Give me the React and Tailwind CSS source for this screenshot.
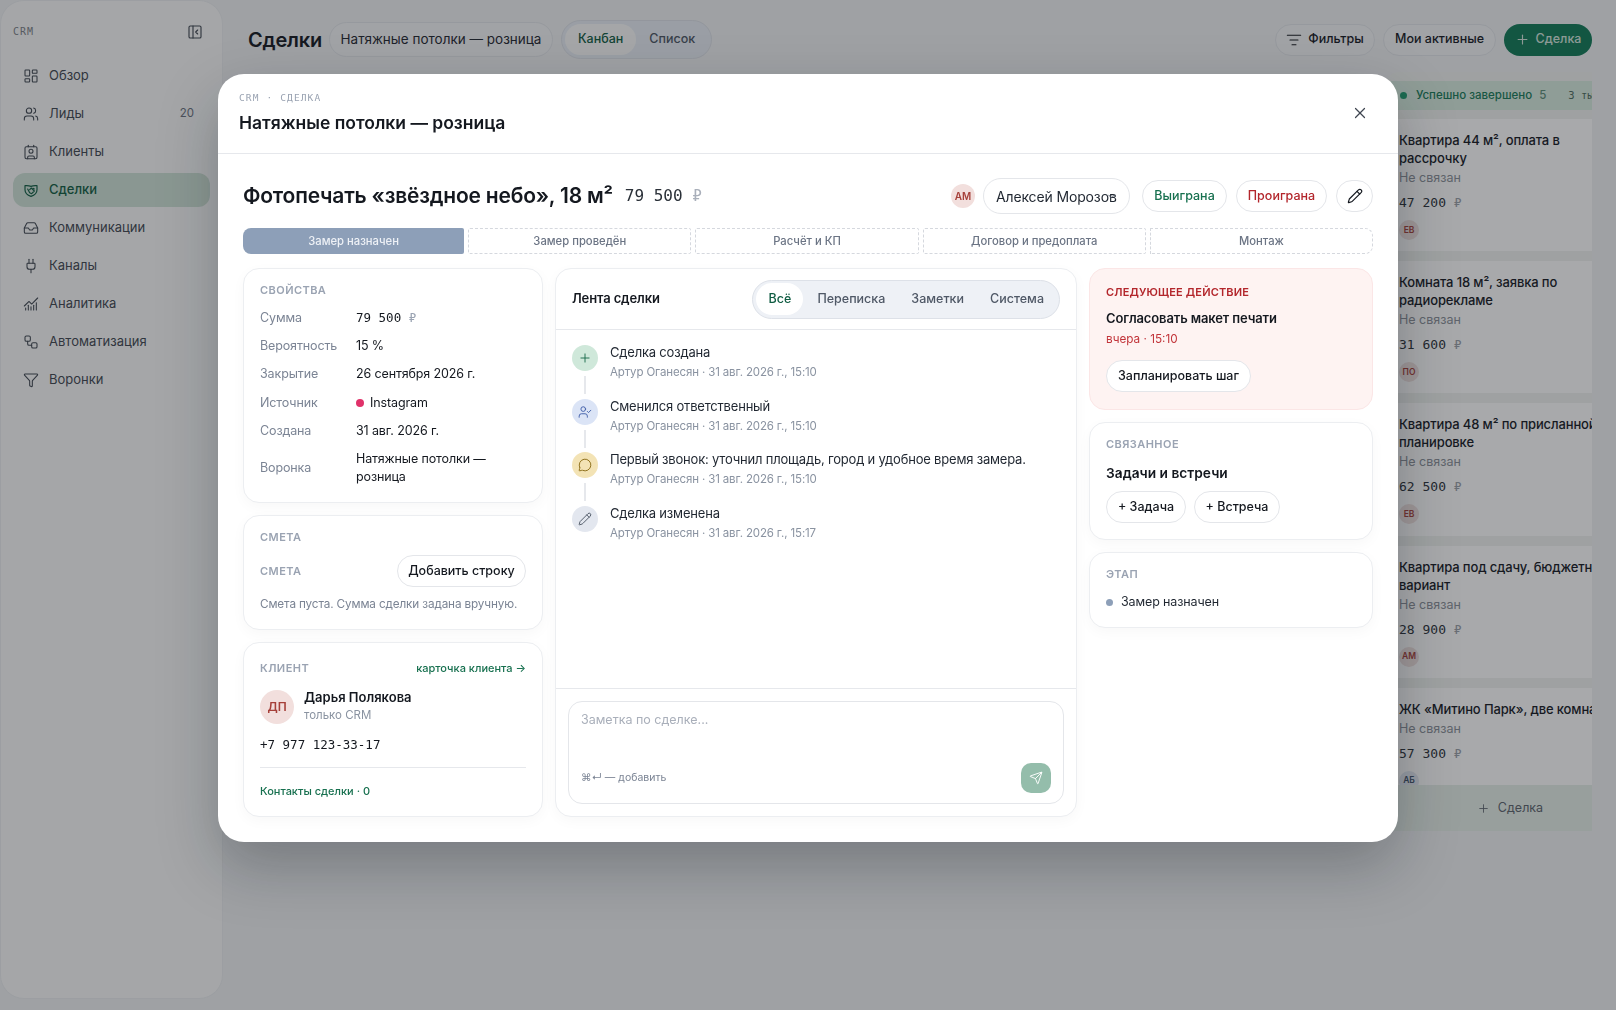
import {
  ChartNoAxesCombined,
  ChevronDown,
  Contact,
  Funnel,
  Inbox,
  LayoutDashboard,
  ListFilter,
  MessageCircle,
  PanelLeftClose,
  Pencil,
  Plug,
  Plus,
  Send,
  UserCheck,
  Users,
  Workflow,
  X,
} from "lucide-react";

const mono = "font-['DejaVu_Sans_Mono',monospace]";

// Щит с рукопожатием, в иконпаке такого нет
function DealsIcon({ size = 16, strokeWidth = 1.6 }) {
  return (
    <svg width={size} height={size} viewBox="0 0 24 24" fill="none" stroke="currentColor" strokeWidth={strokeWidth * 1.1} strokeLinecap="round" strokeLinejoin="round">
      <path d="M3 5.5c3 0 5.5-.4 9 1 3.5-1.4 6-1 9-1v6c0 5-4 8.300-9 10-5-1.700-9-5-9-10Z" />
      <path d="M7 10.500l3 5.500 3 1.500 4-4-4.500-4.500-2.500 2.500" />
      <path d="M17 10.500l-2-1" />
    </svg>
  );
}

const navItems = [
  { label: "Обзор", icon: LayoutDashboard },
  { label: "Лиды", icon: Users, badge: "20" },
  { label: "Клиенты", icon: Contact },
  { label: "Сделки", icon: DealsIcon, active: true },
  { label: "Коммуникации", icon: Inbox },
  { label: "Каналы", icon: Plug },
  { label: "Аналитика", icon: ChartNoAxesCombined },
  { label: "Автоматизация", icon: Workflow },
  { label: "Воронки", icon: Funnel },
];

const boardCards = [
  { title: "Квартира 44 м², оплата в рассрочку", sum: "47 200", who: "ЕВ" },
  { title: "Комната 18 м², заявка по радиорекламе", sum: "31 600", who: "ПО" },
  { title: "Квартира 48 м² по присланной планировке", sum: "62 500", who: "ЕВ" },
  { title: "Квартира под сдачу, бюджетный вариант", sum: "28 900", who: "АМ" },
  { title: "ЖК «Митино Парк», две комнаты", sum: "57 300", who: "АБ", blue: true },
];

const stages = ["Замер проведён", "Расчёт и КП", "Договор и предоплата", "Монтаж"];

const feed = [
  { title: "Сделка создана", time: "15:10", icon: Plus, tone: "bg-[#cfe8da] text-[#1b6b4c]" },
  { title: "Сменился ответственный", time: "15:10", icon: UserCheck, tone: "bg-[#dbe4f6] text-[#3f5ea8]" },
  {
    title: "Первый звонок: уточнил площадь, город и удобное время замера.",
    time: "15:10",
    icon: MessageCircle,
    tone: "bg-[#f3e3b5] text-[#8a6a14]",
  },
  { title: "Сделка изменена", time: "15:17", icon: Pencil, tone: "bg-[#e3e7ef] text-[#4b5563]" },
];

function Sidebar() {
  return (
    <aside className="h-[999px] w-[223px] shrink-0 rounded-[24px] border border-[#eceef0] bg-[#fafbfb] px-[12px]">
      <div className="flex h-[58px] items-center justify-between pt-[3px]">
        <span className={`${mono} text-[10px] tracking-[0.1em] text-[#7c8187]`}>CRM</span>
        <PanelLeftClose size={16} strokeWidth={1.7} className="mr-[7px] text-[#3f4650]" />
      </div>
      <nav className="flex flex-col gap-[4px]">
        {navItems.map((item) => (
          <div
            key={item.label}
            className={`flex h-[34px] items-center gap-[10px] rounded-[12px] px-[10px] text-[13px] ${
              item.active ? "bg-[#cfe3d7] font-medium text-[#0f5c42]" : "text-[#3f4650]"
            }`}
          >
            <item.icon size={16} strokeWidth={1.6} />
            <span className="flex-1">{item.label}</span>
            {item.badge && <span className="pr-[6px] text-[11.5px] text-[#6b7280]">{item.badge}</span>}
          </div>
        ))}
      </nav>
    </aside>
  );
}

function TopBar() {
  return (
    <div className="flex items-center pb-[13px] pt-5">
      <h1 className="text-[20px] font-semibold tracking-[-0.01em] text-[#14181f]">Сделки</h1>
      <div className="ml-[7px] flex h-[35px] w-[224px] items-center justify-center rounded-full border border-[#e3e6ea] bg-[#f4f5f7] text-[13.5px] text-[#1f2630]">
        Натяжные потолки — розница
      </div>
      <div className="ml-[8px] flex h-[39px] items-center rounded-full border border-[#dde1e8] bg-[#e9eef5] p-[3px] text-[12.5px] font-medium">
        <span className="flex h-[31px] items-center rounded-full bg-[#fafbfb] px-[13px] text-[#0f5c42]">Канбан</span>
        <span className="flex h-[31px] items-center px-[13px] text-[#4b5563]">Список</span>
      </div>
      <div className="ml-auto flex items-center gap-[8px] text-[12.5px] font-medium text-[#14181f]">
        <span className="flex h-[32px] w-[100px] items-center justify-center gap-[6px] rounded-full border border-[#e3e6ea] bg-[#f4f5f7]">
          <ListFilter size={16} strokeWidth={1.6} />
          Фильтры
        </span>
        <span className="flex h-[32px] w-[113px] items-center justify-center rounded-full border border-[#e3e6ea] bg-[#f4f5f7]">
          Мои активные
        </span>
        <span className="flex h-[32px] w-[88px] items-center justify-center gap-[6px] rounded-full bg-[#0f7a56] text-[#d5e6de]">
          <Plus size={15} strokeWidth={1.8} />
          Сделка
        </span>
      </div>
    </div>
  );
}

function BoardColumn() {
  return (
    <div className="ml-[1137px] flex h-[759px] w-[250px] shrink-0 flex-col rounded-[14px] bg-[#f0f3f0] pt-[9px]">
      <div className="flex h-[29px] shrink-0 items-center gap-[9px] whitespace-nowrap bg-[#d7ecdf] pl-[15px] text-[11.5px] font-medium text-[#167a57]">
        <span className="h-[7px] w-[7px] rounded-full bg-[#1f9a6d]" />
        <span>Успешно завершено</span>
        <span className="-ml-[2px] text-[#5b8d78]">5</span>
        <span className={`${mono} ml-[13px] text-[10.5px] text-[#4b6b5c]`}>3 тыс</span>
      </div>
      <div className="mt-[9px] flex min-h-0 flex-1 flex-col gap-[10px] overflow-hidden">
        {boardCards.map((card) => (
          <div key={card.sum} className="shrink-0 bg-white px-[14px] pb-[11.2px] pt-[12px]">
            <p className="text-[13px] font-medium leading-[18px] tracking-[-0.01em] text-[#14181f]">{card.title}</p>
            <p className="mt-[2px] text-[12.5px] leading-[18px] text-[#8a9099]">Не связан</p>
            <p className={`${mono} mt-[7px] text-[13px] leading-[18px] text-[#2a3038]`}>
              {card.sum} <span className="text-[#9aa0a8]">₽</span>
            </p>
            <span
              className={`mt-[8px] flex h-[20px] w-[20px] items-center justify-center rounded-full text-[8.5px] font-semibold ${
                card.blue ? "bg-[#e3e9f2] text-[#42536b]" : "bg-[#f0e2e0] text-[#a6403a]"
              }`}
            >
              {card.who}
            </span>
          </div>
        ))}
      </div>
      <div className="flex h-[46px] shrink-0 items-center justify-center gap-[8px] bg-[#e6efe9] text-[12.5px] text-[#5b636d]">
        <Plus size={13} strokeWidth={1.6} />
        Сделка
      </div>
    </div>
  );
}

function Card({ className = "", children }) {
  return (
    <section className={`rounded-[16px] border border-[#eceef1] bg-white shadow-[0_4px_14px_rgba(20,24,31,0.03)] ${className}`}>
      {children}
    </section>
  );
}

function Caption({ className = "tracking-[0.04em] text-[#9aa3b2]", children }) {
  return <h4 className={`text-[11px] font-semibold leading-[14px] ${className}`}>{children}</h4>;
}

function PillButton({ className = "", children }) {
  return (
    <button className={`flex h-[32px] items-center justify-center rounded-full border border-[#e4e6ea] bg-white text-[12.5px] font-medium text-[#14181f] ${className}`}>
      {children}
    </button>
  );
}

function Properties() {
  const rows = [
    ["Вероятность", "15 %"],
    ["Закрытие", "26 сентября 2026 г."],
  ];
  return (
    <Card className="h-[235px] px-[16px] pt-[14px]">
      <Caption>СВОЙСТВА</Caption>
      <dl className="mt-[12px] grid grid-cols-[96px_1fr] items-center gap-y-[10.2px] text-[12.5px] leading-[18px] tracking-[-0.01em]">
        <dt className="text-[#7b8494]">Сумма</dt>
        <dd className={`${mono} text-[12.5px] tracking-normal text-[#14181f]`}>
          79 500 <span className="text-[#9aa3b2]">₽</span>
        </dd>
        {rows.map(([k, v]) => [
          <dt key={k} className="text-[#7b8494]">{k}</dt>,
          <dd key={v} className="text-[#14181f]">{v}</dd>,
        ])}
        <dt className="text-[#7b8494]">Источник</dt>
        <dd className="flex items-center gap-[6px] text-[#14181f]">
          <span className="h-[8px] w-[8px] rounded-full bg-[#e0326a]" />
          Instagram
        </dd>
        <dt className="text-[#7b8494]">Создана</dt>
        <dd className="text-[#14181f]">31 авг. 2026 г.</dd>
        <dt className="text-[#7b8494]">Воронка</dt>
        <dd className="text-[#14181f]">Натяжные потолки — розница</dd>
      </dl>
    </Card>
  );
}

function Estimate() {
  return (
    <Card className="h-[115px] px-[16px] pt-[14px]">
      <Caption>СМЕТА</Caption>
      <div className="mt-[11px] flex items-center justify-between">
        <Caption className="tracking-[0.04em] text-[11.5px] text-[#9aa3b2]">СМЕТА</Caption>
        <PillButton className="w-[129px]">Добавить строку</PillButton>
      </div>
      <p className="mt-[8px] whitespace-nowrap text-[11.75px] leading-[18px] tracking-[-0.012em] text-[#7b8494]">
        Смета пуста. Сумма сделки задана вручную.
      </p>
    </Card>
  );
}

function Client() {
  return (
    <Card className="h-[175px] px-[16px] pt-[18px]">
      <div className="flex items-center justify-between">
        <Caption>КЛИЕНТ</Caption>
        <span className="text-[11px] font-medium leading-[14px] text-[#17704f]">карточка клиента →</span>
      </div>
      <div className="mt-[15px] flex gap-[10px]">
        <span className="flex h-[34px] w-[34px] items-center justify-center rounded-full bg-[#f2dfdd] text-[12px] font-semibold text-[#a6403a]">
          ДП
        </span>
        <div className="-mt-[2px]">
          <p className="text-[13px] font-semibold leading-[18px] text-[#14181f]">Дарья Полякова</p>
          <p className="mt-[1px] text-[11.5px] leading-[17px] text-[#8a93a1]">только CRM</p>
        </div>
      </div>
      <p className={`${mono} mt-[12px] text-[12.5px] leading-[18px] text-[#14181f]`}>+7 977 123-33-17</p>
      <div className="mt-[13px] border-t border-[#e6e8ec] pt-[15px] text-[11px] font-medium leading-[16px] text-[#17704f]">
        Контакты сделки · 0
      </div>
    </Card>
  );
}

function Feed() {
  return (
    <Card className="flex h-[549px] flex-col">
      <div className="flex h-[61px] shrink-0 items-center justify-between border-b border-[#e6e8ec] px-[16px]">
        <h3 className="text-[13px] font-semibold tracking-[-0.01em] text-[#14181f]">Лента сделки</h3>
        <div className="flex h-[39px] items-center rounded-full border border-[#dde1e8] bg-[#eef1f6] px-[3px] text-[12.5px] font-medium text-[#4f5866]">
          <span className="flex h-[32px] w-[47px] items-center justify-center rounded-full bg-white text-[#0f5c42]">Всё</span>
          <span className="flex h-[32px] items-center pl-[14px] pr-[13px]">Переписка</span>
          <span className="flex h-[32px] items-center px-[13px]">Заметки</span>
          <span className="flex h-[32px] items-center pl-[13px] pr-[12px]">Система</span>
        </div>
      </div>
      <ul className="min-h-0 flex-1 px-[16px] pt-[15px]">
        {feed.map((row, i) => (
          <li key={row.title} className="flex h-[53.7px] gap-[12px]">
            <div className="flex w-[26px] shrink-0 flex-col items-center">
              <span className={`flex h-[26px] w-[26px] shrink-0 items-center justify-center rounded-full ${row.tone}`}>
                <row.icon size={14} strokeWidth={1.6} />
              </span>
              {i < feed.length - 1 && <span className="mt-[5px] h-[18px] w-[2px] bg-[#e6e8ec]" />}
            </div>
            <div className="-mt-[3px]">
              <p className="text-[13px] leading-[20px] tracking-[-0.015em] text-[#1f2630]">{row.title}</p>
              <p className="mt-[1px] text-[11.5px] leading-[19px] tracking-[-0.012em] text-[#8a93a1]">Артур Оганесян · 31 авг. 2026 г., {row.time}</p>
            </div>
          </li>
        ))}
      </ul>
      <div className="shrink-0 border-t border-[#e6e8ec] p-[12px]">
        <div className="flex h-[103px] flex-col justify-between rounded-[14px] border border-[#e4e6ea] pb-[10px] pl-[12px] pr-[12px] pt-[9px]">
          <p className="text-[12.5px] leading-[18px] text-[#a9afba]">Заметка по сделке...</p>
          <div className="flex items-center justify-between">
            <span className="text-[10.5px] text-[#7b8494]">⌘↵ — добавить</span>
            <button className="flex h-[30px] w-[30px] items-center justify-center rounded-[10px] bg-[#94bdab] text-white">
              <Send size={14} strokeWidth={1.6} />
            </button>
          </div>
        </div>
      </div>
    </Card>
  );
}

function RightRail() {
  return (
    <div className="flex flex-col gap-[12px]">
      <section className="h-[142px] rounded-[16px] border border-[#fbe6e6] bg-[#fef3f2] px-[16px] pt-[16px]">
        <Caption className="tracking-[0.014em] text-[#b3262c]">СЛЕДУЮЩЕЕ ДЕЙСТВИЕ</Caption>
        <p className="mt-[10px] text-[13px] font-semibold leading-[18px] tracking-[-0.01em] text-[#14181f]">Согласовать макет печати</p>
        <p className="mt-[3px] text-[11.75px] leading-[18px] text-[#c2343a]">вчера · 15:10</p>
        <PillButton className="mt-[12px] w-[145px]">Запланировать шаг</PillButton>
      </section>
      <Card className="h-[118px] px-[16px] pt-[14px]">
        <Caption>СВЯЗАННОЕ</Caption>
        <p className="mt-[13px] text-[13.75px] font-semibold leading-[18px] text-[#14181f]">Задачи и встречи</p>
        <div className="mt-[9px] flex gap-[8px]">
          <PillButton className="w-[80px]">+ Задача</PillButton>
          <PillButton className="w-[86px]">+ Встреча</PillButton>
        </div>
      </Card>
      <Card className="h-[76px] px-[16px] pt-[14px]">
        <Caption>ЭТАП</Caption>
        <div className="mt-[12px] flex items-center gap-[8px] text-[12.5px] leading-[18px] tracking-[-0.01em] text-[#1f2630]">
          <span className="h-[7px] w-[7px] rounded-full bg-[#8d9fb8]" />
          Замер назначен
        </div>
      </Card>
    </div>
  );
}

function DealModal() {
  return (
    <div className="h-[768px] w-[1180px] rounded-[26px] bg-white shadow-[0_24px_60px_rgba(15,20,28,0.28)]">
      <header className="flex h-[80px] items-center justify-between border-b border-[#e6e8ec] pb-[2px] pl-[21px] pr-[29px]">
        <div>
          <p className={`${mono} text-[9.5px] leading-[14px] tracking-[0.12em] text-[#9aa3b2]`}>CRM · СДЕЛКА</p>
          <h2 className="mt-[6px] text-[17.5px] font-semibold leading-[24px] text-[#14181f]">Натяжные потолки — розница</h2>
        </div>
        <X size={18} strokeWidth={1.6} className="text-[#3f4650]" />
      </header>
      <div className="px-[25px] pt-[24px]">
        <div className="flex h-[36px] items-center">
          <h1 className="-mt-[1px] text-[21px] font-semibold tracking-[-0.01em] text-[#14181f]">Фотопечать «звёздное небо», 18 м²</h1>
          <span className={`${mono} ml-[12px] text-[16px] text-[#2a3038]`}>
            79 500 <span className="text-[#a9afba]">₽</span>
          </span>
          <div className="ml-auto flex items-center">
            <span className="flex h-[24px] w-[24px] items-center justify-center rounded-full bg-[#f2dfdd] text-[10px] font-semibold text-[#a6403a]">
              АМ
            </span>
            <div className="relative ml-[8px] flex h-[36px] w-[147px] items-center whitespace-nowrap rounded-full border border-[#e4e6ea] pl-[12px] text-[14px] tracking-[-0.01em] text-[#1f2630]">
              Алексей Морозов
              <ChevronDown size={11} strokeWidth={2} className="absolute right-[12px] top-[12px] text-[#4b5563]" />
            </div>
            <PillButton className="ml-[12px] w-[85px] !text-[#17704f]">Выиграна</PillButton>
            <PillButton className="ml-[9px] w-[91px] !text-[#b3262c]">Проиграна</PillButton>
            <button className="ml-[9px] flex h-[32px] w-[37px] items-center justify-center rounded-full border border-[#e4e6ea] text-[#14181f]">
              <Pencil size={16} strokeWidth={1.75} />
            </button>
          </div>
        </div>
        <div className="mt-[14px] flex h-[26px] gap-[4px] text-[11.25px] font-medium">
          <div className="flex flex-1 items-center justify-center rounded-l-[8px] rounded-r-[2px] bg-[#8d9fb8] text-[#eef1f6]">
            Замер назначен
          </div>
          {stages.map((stage, i) => (
            <div
              key={stage}
              className={`flex flex-1 items-center justify-center border border-dashed border-[#d5d8de] text-[#6b7484] ${
                i === stages.length - 1 ? "rounded-r-[8px]" : "rounded-[2px]"
              }`}
            >
              {stage}
            </div>
          ))}
        </div>
        <div className="mt-[14px] grid grid-cols-[300px_1fr_284px] gap-[12px]">
          <div className="flex flex-col gap-[12px]">
            <Properties />
            <Estimate />
            <Client />
          </div>
          <Feed />
          <RightRail />
        </div>
      </div>
    </div>
  );
}

export default function App() {
  return (
    <div className="relative h-[1010px] w-full overflow-hidden bg-[#f0f2f4] font-['Inter',sans-serif]">
      <div className="flex h-full">
        <Sidebar />
        <main className="flex min-w-0 flex-1 flex-col pl-[25px] pr-[24px]">
          <TopBar />
          <div className="flex overflow-hidden">
            <BoardColumn />
          </div>
        </main>
      </div>
      {/* затемнение под модалкой */}
      <div className="absolute inset-0 flex justify-center bg-[#1a1d21]/[0.38] pt-[74px] backdrop-blur-[0.5px]">
        <DealModal />
      </div>
    </div>
  );
}
